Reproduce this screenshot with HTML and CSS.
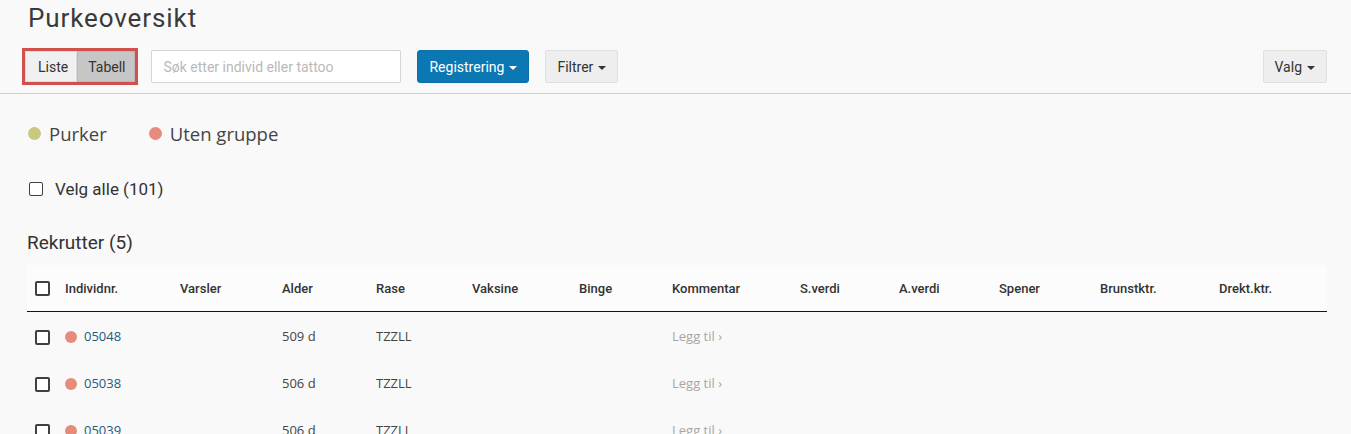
FILE: index.html
```html
<!DOCTYPE html>
<html lang="no">
<head>
<meta charset="utf-8">
<title>Purkeoversikt</title>
<link rel="stylesheet" href="styles.css">
</head>
<body>

<div class="page-head">
  <h1 class="title">Purkeoversikt</h1>
  <div class="toolbar">
    <div class="view-toggle">
      <button class="toggle-btn">Liste</button>
      <button class="toggle-btn active">Tabell</button>
    </div>
    <input class="search" type="text" placeholder="Søk etter individ eller tattoo">
    <button class="btn btn-primary">Registrering <span class="caret"></span></button>
    <button class="btn btn-default">Filtrer <span class="caret"></span></button>
    <div class="spacer"></div>
    <button class="btn btn-default">Valg <span class="caret"></span></button>
  </div>
</div>

<div class="content">
  <div class="legend">
    <span class="legend-item"><span class="dot dot-purker"></span>Purker</span>
    <span class="legend-item"><span class="dot dot-none"></span>Uten gruppe</span>
  </div>

  <label class="select-all"><span class="check small"></span>Velg alle (101)</label>

  <h2 class="group-title">Rekrutter (5)</h2>

  <table class="sows">
    <colgroup>
      <col style="width:38px"><col style="width:115px"><col style="width:102px"><col style="width:94px">
      <col style="width:96px"><col style="width:107px"><col style="width:93px"><col style="width:128px">
      <col style="width:99px"><col style="width:100px"><col style="width:101px"><col style="width:119px">
      <col style="width:108px">
    </colgroup>
    <thead>
      <tr>
        <th class="cb"><span class="check"></span></th>
        <th>Individnr.</th><th>Varsler</th><th>Alder</th><th>Rase</th><th>Vaksine</th><th>Binge</th>
        <th>Kommentar</th><th>S.verdi</th><th>A.verdi</th><th>Spener</th><th>Brunstktr.</th><th>Drekt.ktr.</th>
      </tr>
    </thead>
    <tbody>
      <tr>
        <td class="cb"><span class="check"></span></td>
        <td><span class="dot dot-none sm"></span><a class="id" href="#">05048</a></td>
        <td></td><td>509 d</td><td>TZZLL</td><td></td><td></td>
        <td><a class="add" href="#">Legg til ›</a></td>
        <td></td><td></td><td></td><td></td><td></td>
      </tr>
      <tr>
        <td class="cb"><span class="check"></span></td>
        <td><span class="dot dot-none sm"></span><a class="id" href="#">05038</a></td>
        <td></td><td>506 d</td><td>TZZLL</td><td></td><td></td>
        <td><a class="add" href="#">Legg til ›</a></td>
        <td></td><td></td><td></td><td></td><td></td>
      </tr>
      <tr>
        <td class="cb"><span class="check"></span></td>
        <td><span class="dot dot-none sm"></span><a class="id" href="#">05039</a></td>
        <td></td><td>506 d</td><td>TZZLL</td><td></td><td></td>
        <td><a class="add" href="#">Legg til ›</a></td>
        <td></td><td></td><td></td><td></td><td></td>
      </tr>
    </tbody>
  </table>
</div>

</body>
</html>
```

FILE: styles.css
```css
body {
  margin: 0;
  background-color: #f9f9f9;
  font-family: Roboto, "Liberation Sans", sans-serif;
  color: #333;
}

.page-head {
  padding: 0 24px 0 22px;
  border-bottom: 1px solid #cfcfcf;
}
.title {
  margin: 0;
  padding: 3px 0 0 6px;
  font-size: 26px;
  line-height: 30px;
  font-weight: 400;
  color: #3a3a3a;
  letter-spacing: 0.9px;
}
.toolbar {
  display: flex;
  align-items: center;
  padding: 15px 0 8px;
}
.spacer { flex: 1; }

.view-toggle {
  display: flex;
  border: 3px solid #d0504c;
  height: 37px;
  box-sizing: border-box;
  padding: 0;
}
.toggle-btn {
  border: 1px solid #dcdcdc;
  background: #f0f0f0;
  font-family: Roboto, sans-serif;
  font-size: 14px;
  color: #333;
  padding: 0 8px 0 12px;
  margin: 0;
}
.toggle-btn.active {
  background: #c6c6c6;
  border-color: #b8b8b8;
  padding: 0 9px 0 10px;
}

.search {
  margin-left: 13px;
  width: 250px;
  height: 33px;
  box-sizing: border-box;
  border: 1px solid #d4d4d4;
  border-radius: 2px;
  background: #fff;
  padding: 0 11px;
  font-family: Roboto, sans-serif;
  font-size: 14px;
}
.search::placeholder { color: #b9b9b9; }

.btn {
  height: 33px;
  box-sizing: border-box;
  border-radius: 3px;
  font-family: Roboto, sans-serif;
  font-size: 14px;
  padding: 0 11px;
  display: flex;
  align-items: center;
  gap: 5px;
}
.btn-primary {
  margin-left: 16px;
  background: #0b78b4;
  border: 1px solid #0a71aa;
  color: #fff;
}
.btn-default {
  margin-left: 16px;
  background: #eeeeee;
  border: 1px solid #e0e0e0;
  color: #333;
  border-radius: 2px;
}
.caret {
  width: 0;
  height: 0;
  border-left: 4px solid transparent;
  border-right: 4px solid transparent;
  border-top: 4px solid currentColor;
  margin-top: 2px;
}

.content { padding: 0 24px 0 27px; }

.legend {
  display: flex;
  gap: 42px;
  margin-top: 27px;
  height: 24px;
  align-items: center;
  padding-left: 1px;
  font-family: "Open Sans", sans-serif;
  font-size: 18.5px;
  color: #444;
}
.legend-item { display: flex; align-items: center; gap: 8px; }
.dot {
  display: inline-block;
  width: 13px;
  height: 13px;
  border-radius: 50%;
}
.dot-purker { background: #c8c87e; }
.dot-none { background: #e68c7c; }
.dot.sm { width: 12px; height: 12px; margin-right: 7px; vertical-align: -2px; }

.check {
  display: inline-block;
  width: 15px;
  height: 15px;
  box-sizing: border-box;
  border: 2px solid #404040;
  border-radius: 2px;
  background: #fff;
}
.check.small { width: 14px; height: 14px; border-width: 1.5px; margin-right: 12px; }

.select-all {
  display: flex;
  align-items: center;
  margin-top: 32px;
  height: 24px;
  padding-left: 2px;
  font-size: 17px;
  color: #333;
}

.group-title {
  margin: 30px 0 0;
  height: 24px;
  line-height: 24px;
  font-size: 19px;
  font-weight: 400;
  color: #333;
}

.sows {
  margin-top: 10px;
  width: 1300px;
  border-collapse: collapse;
  table-layout: fixed;
}
.sows th {
  height: 46px;
  text-align: left;
  font-size: 13px;
  font-weight: 500;
  color: #333;
  padding: 0;
  border-bottom: 1px solid #151515;
  background: #fcfcfc;
}
.sows td {
  height: 47px;
  padding: 0;
  font-family: "Open Sans", sans-serif;
  font-size: 13px;
  color: #444;
}
.sows .cb { padding-left: 8px; }
.sows .cb .check { vertical-align: middle; }
.id { color: #1f5a7e; text-decoration: none; }
.add { color: #a6a6a6; text-decoration: none; }
```
